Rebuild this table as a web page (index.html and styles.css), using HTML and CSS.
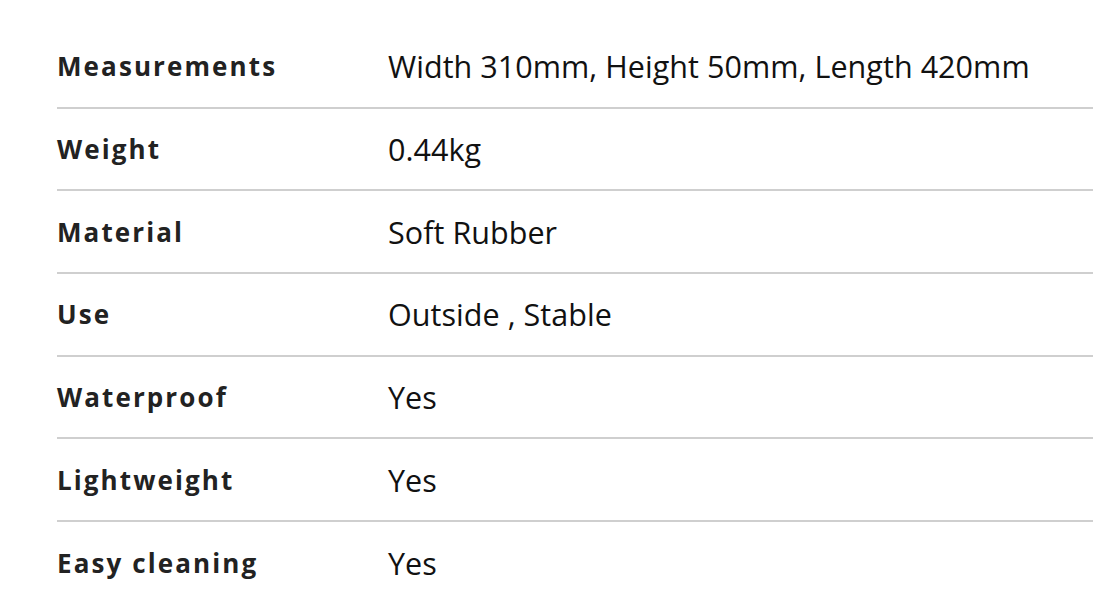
FILE: index.html
```html
<!DOCTYPE html>
<html>
<head>
<meta charset="utf-8">
<link rel="stylesheet" href="styles.css">
</head>
<body>
<div class="wrap">
<table class="specs">
<tbody>
<tr><th>Measurements</th><td>Width 310mm, Height 50mm, Length 420mm</td></tr>
<tr><th>Weight</th><td>0.44kg</td></tr>
<tr><th>Material</th><td>Soft Rubber</td></tr>
<tr><th>Use</th><td>Outside , Stable</td></tr>
<tr><th>Waterproof</th><td>Yes</td></tr>
<tr><th>Lightweight</th><td>Yes</td></tr>
<tr><th>Easy cleaning</th><td>Yes</td></tr>
</tbody>
</table>
</div>
</body>
</html>
```

FILE: styles.css
```css
html, body {
  margin: 0;
  padding: 0;
  background: #fff;
}
.wrap {
  padding: 25px 17px 0 57px;
}
.specs {
  width: 1036px;
  border-collapse: collapse;
  font-family: "Open Sans", sans-serif;
}
.specs tr {
  height: 82.67px;
}
.specs tr + tr {
  border-top: 2px solid #cfcfcf;
}
.specs th {
  width: 331px;
  padding: 0;
  text-align: left;
  font-weight: 700;
  font-size: 26px;
  letter-spacing: 2.1px;
  color: #222;
  vertical-align: middle;
}
.specs td {
  padding: 0;
  font-size: 30.5px;
  letter-spacing: 0.05px;
  color: #111;
  vertical-align: middle;
}
```
